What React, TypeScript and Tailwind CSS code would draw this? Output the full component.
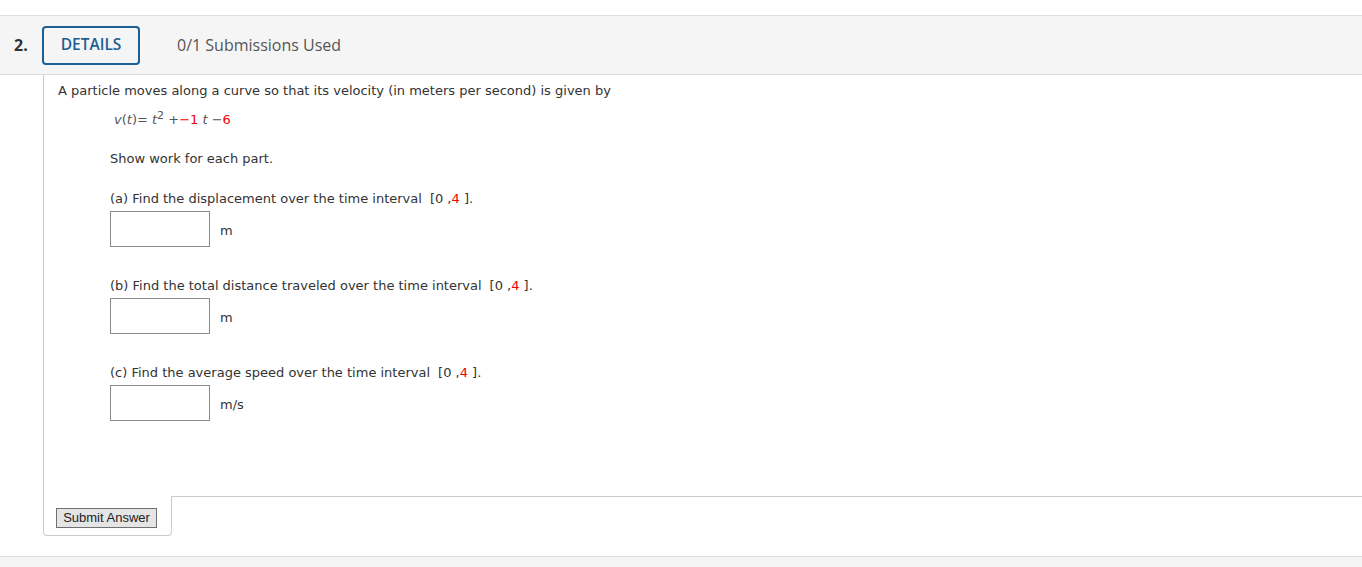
import React from "react";

const body = { fontFamily: '"DejaVu Sans", Verdana, sans-serif' } as React.CSSProperties;

function AnswerRow({ unit }: { unit: string }) {
  return (
    <div className="flex items-center mt-[3px]">
      <div className="w-[100px] h-[36px] border border-[#8a8a8a] bg-white" />
      <span className="ml-[10px] mt-[4px] text-[13px] leading-[18px] text-[#333]">{unit}</span>
    </div>
  );
}

function Interval() {
  return (
    <span className="ml-[8px]">
      [0 ,<span className="text-[#e00]">4</span> ].
    </span>
  );
}

export default function App() {
  return (
    <div className="w-[1362px] h-[567px] bg-white overflow-hidden">
      <div className="h-[15px]" />
      <div
        className="h-[60px] bg-[#f5f5f5] border-t border-b border-[#dddddd] flex items-center"
        style={{ fontFamily: '"Open Sans", sans-serif' }}
      >
        <span className="ml-[14px] w-[28px] text-[16px] font-bold text-[#333]">2.</span>
        <div className="w-[98px] h-[39px] border-2 border-[#1b5f94] rounded-[4px] flex items-center justify-center text-[15.5px] font-semibold text-[#1b5f94]">
          DETAILS
        </div>
        <span className="ml-[37px] text-[16px] text-[#555]">0/1 Submissions Used</span>
      </div>

      <div className="ml-[43px] border-l border-[#cccccc] pl-[14px] pt-[7px] h-[421px] text-[13px] leading-[18px] text-[#333]" style={body}>
        <div>A particle moves along a curve so that its velocity (in meters per second) is given by</div>
        <div className="mt-[11px] ml-[56px] text-[#555]">
          <i>v</i>(<i>t</i>)= <i>t</i>
          <sup className="text-[11px]">2</sup> +<span className="text-[#e00]">−1</span> <i>t</i> −<span className="text-[#e00]">6</span>
        </div>
        <div className="ml-[52px]">
          <div className="mt-[21px]">Show work for each part.</div>
          <div className="mt-[22px]">
            (a) Find the displacement over the time interval
            <Interval />
          </div>
          <AnswerRow unit="m" />
          <div className="mt-[30px]">
            (b) Find the total distance traveled over the time interval
            <Interval />
          </div>
          <AnswerRow unit="m" />
          <div className="mt-[30px]">
            (c) Find the average speed over the time interval
            <Interval />
          </div>
          <AnswerRow unit="m/s" />
        </div>
      </div>

      <div className="flex h-[40px]">
        <div className="ml-[43px] w-[129px] border-l border-r border-b border-[#cccccc] rounded-b-[4px] pl-[12px] pt-[12px]">
          <button
            className="block h-[20px] w-[101px] bg-[#e5e5e5] border border-[#707070] text-[13px] leading-[18px] text-[#222]"
            style={{ fontFamily: '"Liberation Sans", Arial, sans-serif' }}
          >
            Submit Answer
          </button>
        </div>
        <div className="flex-1 border-t border-[#cccccc]" />
      </div>

      <div className="h-[20px]" />
      <div className="h-[20px] border-t border-[#dddddd] bg-[#f5f5f5]" />
    </div>
  );
}
